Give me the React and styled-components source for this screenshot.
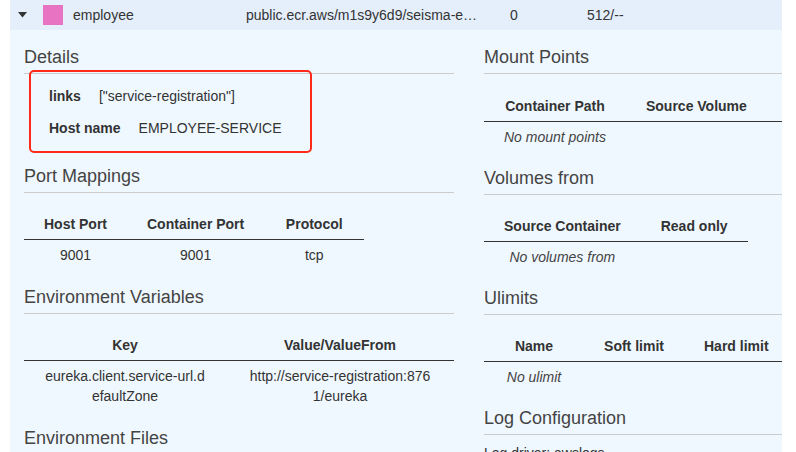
import React from 'react'
import styled, { createGlobalStyle } from 'styled-components'

const Global = createGlobalStyle`
  body {
    margin: 0;
    background: #fff;
    font-family: "Liberation Sans", Helvetica, Arial, sans-serif;
    color: #333;
  }
`

const Page = styled.div`
  padding: 0 14px 0 10px;
  height: 452px;
  overflow: hidden;
`
const Panel = styled.div`
  background: #f0f8ff;
  min-height: 452px;
`
const RowHead = styled.div`
  display: flex;
  align-items: center;
  height: 30px;
  background: #e4effb;
  font-size: 14px;
  color: #333;
`
const Caret = styled.div`
  width: 33px;
  padding-left: 8px;
  box-sizing: border-box;
  display: flex;
  align-items: center;
`
const Swatch = styled.div`
  width: 20px;
  height: 20px;
  background: #e873c2;
  margin-right: 10px;
`
const Cell = styled.div`
  width: ${p => p.$w}px;
  white-space: nowrap;
  overflow: hidden;
  text-overflow: ellipsis;
  padding-right: ${p => p.$pr || 0}px;
  box-sizing: border-box;
`
const Body = styled.div`
  display: grid;
  grid-template-columns: 430px 1fr;
  column-gap: 30px;
  padding: 16px 0 0 14px;
`
const Column = styled.div`
  min-width: 0;
  overflow: hidden;
`
const Section = styled.section`
  position: relative;
  & + & {
    margin-top: 16px;
  }
`
const Heading = styled.h3`
  margin: 0;
  font-size: 18px;
  font-weight: 400;
  line-height: 22px;
  color: #444;
  padding-bottom: 5px;
  border-bottom: 1px solid #ccc;
`
const KvList = styled.div`
  padding: 6px 0 5px 25px;
  font-size: 14px;
`
const KvRow = styled.div`
  display: flex;
  align-items: center;
  gap: 18px;
  height: 32px;
  line-height: 20px;
`
const Key = styled.span`
  font-weight: 700;
`
const Annotation = styled.div`
  position: absolute;
  top: 24px;
  left: 5px;
  width: 283px;
  height: 83px;
  box-sizing: border-box;
  border: 2px solid #ff2a1a;
  border-radius: 5px;
  pointer-events: none;
`
const Table = styled.table`
  margin-top: ${p => p.$mt || 16}px;
  border-collapse: collapse;
  font-size: 14px;
  table-layout: ${p => (p.$fixed ? 'fixed' : 'auto')};
  width: ${p => (p.$fixed ? '430px' : 'auto')};
`
const Th = styled.th`
  font-weight: 700;
  padding: 5px 20px;
  line-height: 20px;
  border-bottom: 1px solid #333;
  text-align: center;
  white-space: nowrap;
  min-width: 60px;
  color: #333;
`
const Td = styled.td`
  padding: ${p => (p.$empty ? '5px 20px 4px' : '5px 20px')};
  line-height: 20px;
  text-align: center;
  word-break: break-all;
  font-style: ${p => (p.$empty ? 'italic' : 'normal')};
  white-space: ${p => (p.$empty ? 'nowrap' : 'normal')};
  color: ${p => (p.$empty ? '#444' : '#333')};
`
const Note = styled.p`
  margin: 8px 0 0;
  font-size: 14px;
  line-height: 20px;
`

function DataTable({ heads, rows, empty, fixed, cols, mt }) {
  return (
    <Table $fixed={fixed} $mt={mt}>
      {cols && (
        <colgroup>
          {cols.map((w, i) => <col key={i} style={{ width: w }} />)}
        </colgroup>
      )}
      <thead>
        <tr>{heads.map(h => <Th key={h}>{h}</Th>)}</tr>
      </thead>
      <tbody>
        {rows && rows.length ? rows.map((r, i) => (
          <tr key={i}>{r.map((c, j) => <Td key={j}>{c}</Td>)}</tr>
        )) : (
          <tr>
            <Td $empty>{empty}</Td>
            {heads.slice(1).map(h => <Td key={h} $empty />)}
          </tr>
        )}
      </tbody>
    </Table>
  )
}

export default function App() {
  return (
    <Page>
      <Global />
      <Panel>
        <RowHead>
          <Caret>
            <svg width="9" height="6" viewBox="0 0 9 6">
              <polygon points="0,0 9,0 4.5,5.5" fill="#333" />
            </svg>
          </Caret>
          <Swatch />
          <Cell $w={173}>employee</Cell>
          <Cell $w={264} $pr={24}>public.ecr.aws/m1s9y6d9/seisma-employee:latest</Cell>
          <Cell $w={77}>0</Cell>
          <Cell $w={100}>512/--</Cell>
        </RowHead>
        <Body>
          <Column>
            <Section>
              <Heading>Details</Heading>
              <KvList>
                <KvRow><Key>links</Key><span>["service-registration"]</span></KvRow>
                <KvRow><Key>Host name</Key><span>EMPLOYEE-SERVICE</span></KvRow>
              </KvList>
              <Annotation />
            </Section>
            <Section>
              <Heading>Port Mappings</Heading>
              <DataTable
                heads={['Host Port', 'Container Port', 'Protocol']}
                rows={[['9001', '9001', 'tcp']]}
              />
            </Section>
            <Section>
              <Heading>Environment Variables</Heading>
              <DataTable
                fixed
                cols={[202, 228]}
                heads={['Key', 'Value/ValueFrom']}
                rows={[['eureka.client.service-url.defaultZone', 'http://service-registration:8761/eureka']]}
              />
            </Section>
            <Section>
              <Heading>Environment Files</Heading>
            </Section>
          </Column>
          <Column>
            <Section>
              <Heading>Mount Points</Heading>
              <DataTable mt={17} heads={['Container Path', 'Source Volume', 'Read only']} empty="No mount points" />
            </Section>
            <Section>
              <Heading>Volumes from</Heading>
              <DataTable heads={['Source Container', 'Read only']} empty="No volumes from" />
            </Section>
            <Section>
              <Heading>Ulimits</Heading>
              <DataTable heads={['Name', 'Soft limit', 'Hard limit']} empty="No ulimit" />
            </Section>
            <Section>
              <Heading>Log Configuration</Heading>
              <Note>Log driver: awslogs</Note>
            </Section>
          </Column>
        </Body>
      </Panel>
    </Page>
  )
}
